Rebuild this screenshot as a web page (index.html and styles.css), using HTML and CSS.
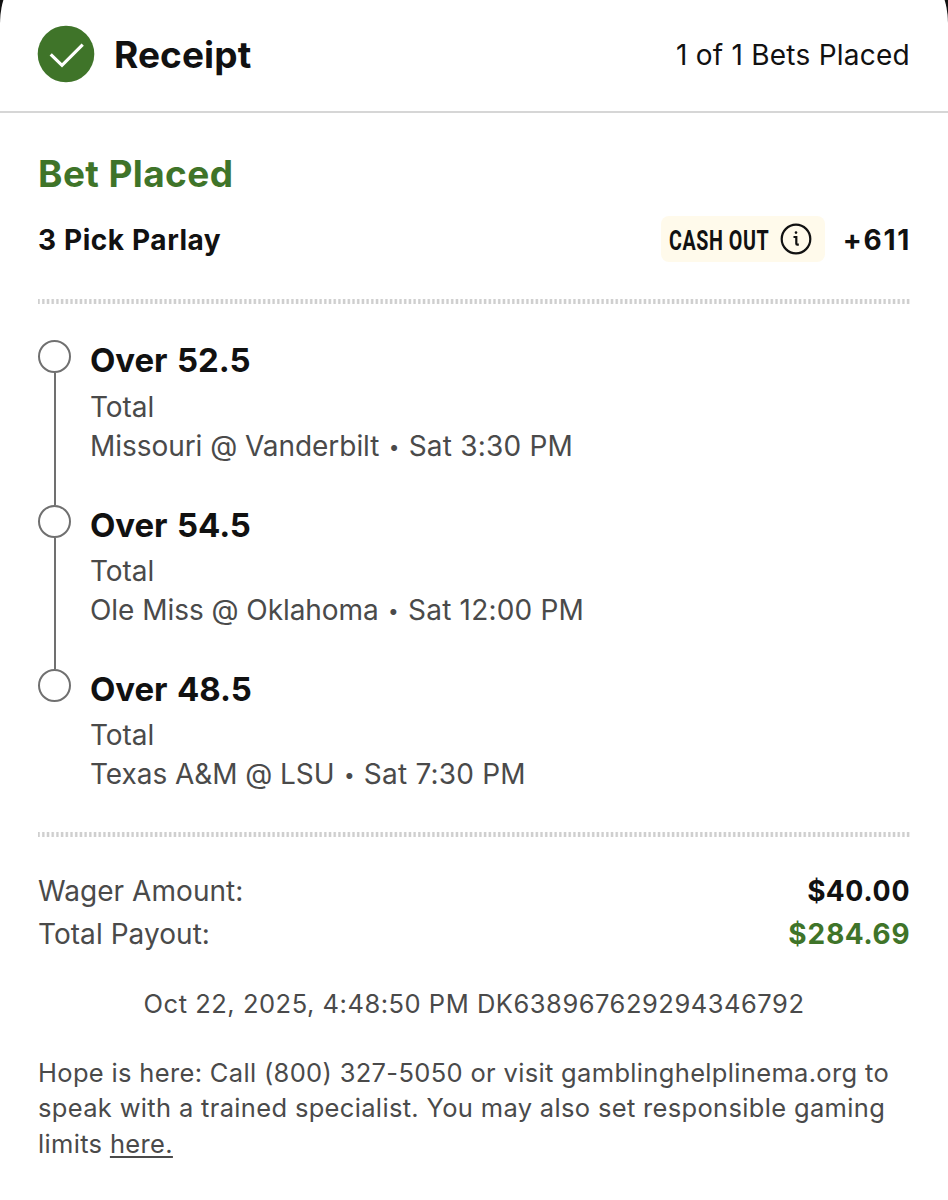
FILE: index.html
```
<!DOCTYPE html>
<html lang="en">
<head>
  <meta charset="UTF-8">
  <meta name="viewport" content="width=device-width, initial-scale=1.0">
  <title>Receipt</title>
  <link rel="stylesheet" href="styles.css">
</head>
<body>
  <div class="sheet">
    <header class="header">
      <svg class="check" width="58" height="58" viewBox="0 0 58 58">
        <circle cx="29" cy="29" r="28.3" fill="#3f7429"/>
        <path d="M13.7 29.3 L25 40.3 L45.7 19.6" fill="none" stroke="#fff" stroke-width="3.2"/>
      </svg>
      <h1 class="title">Receipt</h1>
      <div class="count">1 of 1 Bets Placed</div>
    </header>

    <main class="content">
      <h2 class="status">Bet Placed</h2>

      <div class="summary">
        <div class="bet-type">3 Pick Parlay</div>
        <div class="cashout">
          <div class="cashout-label"><span class="cashout-text">CASH OUT</span></div>
          <svg width="32" height="32" viewBox="0 0 32 32" fill="none" stroke="#111" stroke-width="2.2">
            <circle cx="16" cy="16" r="14.3"/>
            <path d="M13.5 14 H16.3 V20.7 Q16.3 21.7 17.3 21.7 H18.8"/>
            <circle cx="16" cy="9.6" r="1.3" fill="#111" stroke="none"/>
          </svg>
        </div>
        <div class="odds">+611</div>
      </div>

      <div class="divider"></div>

      <div class="picks">
        <div class="pick">
          <div class="rail"><div class="dot"></div><div class="line"></div></div>
          <div>
            <div class="pick-name">Over 52.5</div>
            <div class="pick-info">Total</div>
            <div class="pick-info">Missouri @ Vanderbilt <span class="bullet">•</span> <span class="time">Sat 3:30 PM</span></div>
          </div>
        </div>
        <div class="pick">
          <div class="rail"><div class="dot"></div><div class="line"></div></div>
          <div>
            <div class="pick-name">Over 54.5</div>
            <div class="pick-info">Total</div>
            <div class="pick-info">Ole Miss @ Oklahoma <span class="bullet">•</span> <span class="time">Sat 12:00 PM</span></div>
          </div>
        </div>
        <div class="pick">
          <div class="rail"><div class="dot"></div></div>
          <div>
            <div class="pick-name">Over 48.5</div>
            <div class="pick-info">Total</div>
            <div class="pick-info">Texas A&amp;M @ LSU <span class="bullet">•</span> <span class="time">Sat 7:30 PM</span></div>
          </div>
        </div>
      </div>

      <div class="divider"></div>

      <div class="amounts">
        <div class="row">
          <span class="label">Wager Amount:</span>
          <span class="value">$40.00</span>
        </div>
        <div class="row">
          <span class="label">Total Payout:</span>
          <span class="value payout">$284.69</span>
        </div>
      </div>

      <div class="bet-id">Oct 22, 2025, 4:48:50 PM DK638967629294346792</div>

      <p class="help">Hope is here: Call (800) 327-5050 or visit gamblinghelplinema.org to<br>speak with a trained specialist. You may also set responsible gaming<br>limits <a class="link" href="#">here.</a></p>
    </main>
  </div>
</body>
</html>
```

FILE: styles.css
```
html {
  background-color: #111;
}

body {
  margin: 0;
  height: 1200px;
  overflow: hidden;
  font-family: Inter, "Liberation Sans", sans-serif;
  font-size: 28px;
  color: #111;
}

/* only the lower part of the rounded corners shows */
.sheet {
  box-sizing: border-box;
  height: 1257px;
  margin-top: -57px;
  padding-top: 57px;
  border-radius: 80px 80px 0 0;
  background-color: #fff;
}

.header {
  display: flex;
  align-items: center;
  box-sizing: border-box;
  height: 113px;
  padding: 0 38px 2px 37px;
  border-bottom: 2px solid #d6d6d6;
}

.check {
  margin-bottom: 1px;
}

.title {
  margin: 0 0 0 19px;
  font-size: 37px;
  font-weight: 700;
  letter-spacing: 0.1px;
}

.count {
  margin-left: auto;
  letter-spacing: 0.25px;
}

.content {
  padding: 0 38px;
}

.status {
  margin: 0;
  padding-top: 39px;
  font-size: 37px;
  line-height: 44px;
  font-weight: 700;
  letter-spacing: 0.4px;
  color: #3f7429;
}

.summary {
  display: flex;
  align-items: center;
  height: 46px;
  margin-top: 20px;
}

.bet-type {
  padding-top: 2px;
  font-weight: 700;
  letter-spacing: 0.5px;
  word-spacing: 0.4px;
}

.cashout {
  display: flex;
  align-items: center;
  justify-content: space-between;
  box-sizing: border-box;
  width: 164px;
  height: 46px;
  margin-left: auto;
  padding: 0 13px 0 8px;
  border-radius: 8px;
  background-color: #fffaeb;
}

.cashout-label {
  width: 100px;
  padding-top: 2px;
}

/* condensed lettering */
.cashout-text {
  display: inline-block;
  font-family: Roboto, sans-serif;
  font-size: 27.5px;
  font-weight: 700;
  letter-spacing: 0.8px;
  white-space: nowrap;
  transform: scaleX(0.715);
  transform-origin: left center;
}

.odds {
  width: 86px;
  margin-right: -1px;
  padding-top: 2px;
  text-align: right;
  font-weight: 700;
  letter-spacing: 1.7px;
}

.divider {
  height: 5px;
  margin-right: -1px;
  background: repeating-linear-gradient(to right, #cfcfcf 0, #cfcfcf 1.2px, #fff 2.5px, #fff 3.5px, #cfcfcf 4.7px);
}

.summary + .divider {
  margin-top: 37px;
}

.picks {
  box-sizing: border-box;
  height: 528px;
  padding-top: 36.3px;
}

.pick {
  display: flex;
  height: 164.4px;
}

.rail {
  display: flex;
  flex-direction: column;
  align-items: center;
  width: 33px;
  margin-right: 19px;
}

.dot {
  box-sizing: border-box;
  flex: none;
  width: 33px;
  height: 33px;
  border: 2px solid #707070;
  border-radius: 50%;
}

.line {
  flex: 1;
  width: 2px;
  background-color: #707070;
}

.pick-name {
  margin-bottom: 7.4px;
  font-size: 33px;
  line-height: 40px;
  font-weight: 700;
  letter-spacing: -0.1px;
  word-spacing: 2px;
}

.pick-info {
  line-height: 39px;
  color: #4a4a4a;
  white-space: nowrap;
  letter-spacing: -0.05px;
}

.bullet {
  margin: 0 1.5px;
  font-size: 19px;
  line-height: 1;
  vertical-align: 2px;
}

.time {
  letter-spacing: 0.2px;
}

.amounts {
  padding-top: 33px;
}

.row {
  display: flex;
  justify-content: space-between;
  line-height: 43px;
}

.label {
  color: #4a4a4a;
  letter-spacing: 0.05px;
}

.value {
  margin-right: -0.5px;
  font-weight: 700;
  letter-spacing: 0.85px;
  font-variant-numeric: tabular-nums;
}

.payout {
  color: #3f7429;
}

.bet-id {
  margin-top: 28px;
  font-size: 25.5px;
  line-height: 40px;
  text-align: center;
  color: #4a4a4a;
  letter-spacing: 0.52px;
}

.help {
  margin: 31px 0 0;
  font-size: 25.5px;
  line-height: 35.3px;
  color: #4a4a4a;
  white-space: nowrap;
  letter-spacing: 0.33px;
}

.link {
  color: inherit;
  text-underline-offset: 3px;
  text-decoration-thickness: 2px;
}
```
